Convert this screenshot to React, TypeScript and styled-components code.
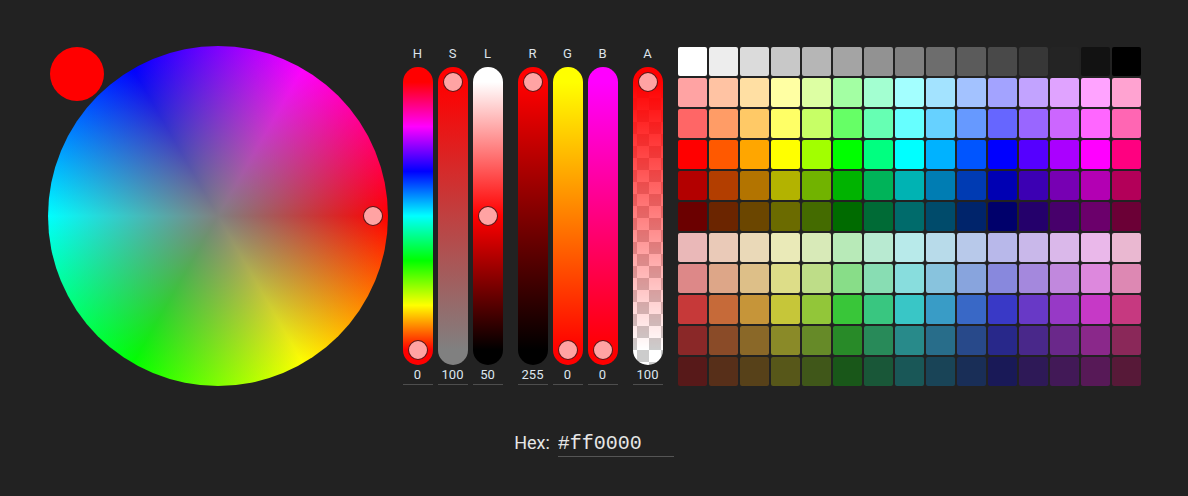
import React from "react";
import styled, { createGlobalStyle } from "styled-components";

const GlobalStyle = createGlobalStyle`
  body {
    margin: 0;
    background: #222222;
    font-family: Roboto, "Liberation Sans", sans-serif;
    color: #e6e6e6;
  }
`;

const SPage = styled.div`
  width: 1188px;
  height: 496px;
  display: flex;
  flex-direction: column;
  align-items: center;
  padding-top: 46px;
  box-sizing: border-box;
`;

const STopRow = styled.div`
  display: flex;
  align-items: flex-start;
  gap: 15px;
`;

const SWheel = styled.div`
  position: relative;
  width: 340px;
  height: 340px;
  border-radius: 50%;
  background: radial-gradient(circle closest-side, #808080, rgba(128, 128, 128, 0)),
    conic-gradient(from 90deg, #ff0000, #ffff00, #00ff00, #00ffff, #0000ff, #ff00ff, #ff0000);
`;

const SPreview = styled.div`
  position: absolute;
  top: 1px;
  left: 2px;
  width: 54px;
  height: 54px;
  border-radius: 50%;
  background: #ff0000;
`;

const SThumb = styled.div`
  position: absolute;
  width: 18px;
  height: 18px;
  border-radius: 50%;
  background: #ffa3a3;
  border: 1px solid rgba(60, 0, 0, 0.85);
`;

const SWheelThumb = styled(SThumb)`
  left: 315px;
  top: 160px;
`;

const SSliders = styled.div`
  display: flex;
  gap: 15px;
`;

const SGroup = styled.div`
  display: flex;
  gap: 5px;
`;

const SColumn = styled.div`
  width: 30px;
  display: flex;
  flex-direction: column;
  align-items: center;
`;

const SLabel = styled.div`
  font-size: 13px;
  line-height: 16px;
  height: 16px;
  margin-bottom: 5px;
  color: #dde4ea;
`;

const STrack = styled.div<{ $bg: string }>`
  position: relative;
  width: 30px;
  height: 298px;
  border-radius: 15px;
  background: ${(p) => p.$bg};
`;

const STrackThumb = styled(SThumb)`
  left: 5px;
`;

const SValue = styled.div`
  width: 30px;
  text-align: center;
  font-size: 13px;
  line-height: 16px;
  margin-top: 2px;
  padding-bottom: 1px;
  border-bottom: 1px solid #4e4e4e;
  color: #dde6ee;
`;

const SGrid = styled.div`
  display: grid;
  grid-template-columns: repeat(15, 29px);
  grid-auto-rows: 29px;
  gap: 2px;
  margin-top: 1px;
`;

const SSwatch = styled.div<{ $color: string }>`
  border-radius: 2px;
  background: ${(p) => p.$color};
`;

const SHexRow = styled.div`
  display: flex;
  align-items: baseline;
  gap: 8px;
  margin-top: 45px;
`;

const SHexLabel = styled.span`
  font-size: 18px;
  line-height: 24px;
  color: #e6e6e6;
`;

const SHexInput = styled.input`
  width: 116px;
  height: 24px;
  box-sizing: content-box;
  padding: 0;
  margin: 0;
  border: none;
  border-bottom: 1px solid #555555;
  outline: none;
  background: transparent;
  color: #e6e6e6;
  font-family: "Liberation Mono", monospace;
  font-size: 20px;
  line-height: 24px;
`;

// gradient from bottom to top, stops between the thumb ends (15px inset)
const ramp = (colors: string[]) => {
  const n = colors.length - 1;
  const stops = colors.map((c, i) => {
    if (i === 0) return `${c} 15px`;
    if (i === n) return `${c} calc(100% - 15px)`;
    return `${c} calc(15px + (100% - 30px) * ${i / n})`;
  });
  return `linear-gradient(to top, ${stops.join(", ")})`;
};

const checker =
  "repeating-conic-gradient(#cccccc 0 25%, #ffffff 0 50%) 4px 7px / 24px 24px";

const groups = [
  [
    { label: "H", value: 0, pos: 0, bg: ramp(["#ff0000", "#ffff00", "#00ff00", "#00ffff", "#0000ff", "#ff00ff", "#ff0000"]) },
    { label: "S", value: 100, pos: 1, bg: ramp(["#808080", "#ff0000"]) },
    { label: "L", value: 50, pos: 0.5, bg: ramp(["#000000", "#ff0000", "#ffffff"]) },
  ],
  [
    { label: "R", value: 255, pos: 1, bg: ramp(["#000000", "#ff0000"]) },
    { label: "G", value: 0, pos: 0, bg: ramp(["#ff0000", "#ffff00"]) },
    { label: "B", value: 0, pos: 0, bg: ramp(["#ff0000", "#ff00ff"]) },
  ],
  [
    { label: "A", value: 100, pos: 1, bg: `${ramp(["rgba(255,0,0,0)", "rgba(255,0,0,1)"])}, ${checker}` },
  ],
];

const hues = [0, 21, 39, 60, 82, 120, 150, 180, 198, 220, 240, 260, 280, 300, 330];
const shades: [number, number][] = [
  [100, 82],
  [100, 70],
  [100, 50],
  [100, 35],
  [100, 21],
  [55, 82],
  [55, 70],
  [55, 50],
  [55, 35],
  [55, 22],
];

const palette: string[] = [
  ...Array.from({ length: 15 }, (_, i) => `hsl(0, 0%, ${100 - (i * 100) / 14}%)`),
  ...shades.flatMap(([s, l]) => hues.map((h) => `hsl(${h}, ${s}%, ${l}%)`)),
];

const App = () => {
  return (
    <SPage>
      <GlobalStyle />
      <STopRow>
        <SWheel>
          <SPreview />
          <SWheelThumb />
        </SWheel>
        <SSliders>
          {groups.map((group, gi) => (
            <SGroup key={gi}>
              {group.map((s) => (
                <SColumn key={s.label}>
                  <SLabel>{s.label}</SLabel>
                  <STrack $bg={s.bg}>
                    <STrackThumb style={{ top: `${5 + (1 - s.pos) * 268}px` }} />
                  </STrack>
                  <SValue>{s.value}</SValue>
                </SColumn>
              ))}
            </SGroup>
          ))}
        </SSliders>
        <SGrid>
          {palette.map((c, i) => (
            <SSwatch key={i} $color={c} />
          ))}
        </SGrid>
      </STopRow>
      <SHexRow>
        <SHexLabel>Hex:</SHexLabel>
        <SHexInput readOnly value="#ff0000" />
      </SHexRow>
    </SPage>
  );
};

export default App;
